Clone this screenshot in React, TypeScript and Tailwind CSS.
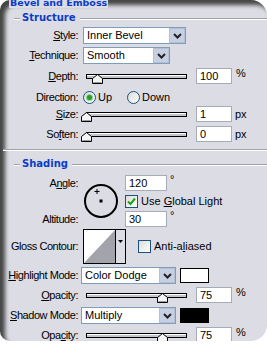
import React from 'react';

const Label = ({ children, className = '' }: { children: React.ReactNode; className?: string }) => (
  <div className={`w-[78px] shrink-0 text-right whitespace-nowrap tracking-[-0.45px] ${className}`}>{children}</div>
);

const Field = ({ value, w = 'w-[36px]' }: { value: string; w?: string }) => (
  <div className={`${w} h-[16px] bg-white border border-[#a5acb5] pl-[3px] leading-[14px] shrink-0`}>{value}</div>
);

const Slider = ({ thumb }: { thumb: number }) => (
  <div className="relative w-[101px] h-[15px] ml-[8px] shrink-0">
    <div className="absolute left-0 top-[5px] w-[101px] h-[5px] border border-black bg-[#c4c4cc] shadow-[inset_0_1px_0_#fff]" />
    <svg className="absolute top-[5px]" style={{ left: thumb }} width="11" height="10" viewBox="0 0 11 10">
      <path d="M0.5 9.5V4.5L5.5 0.5L10.5 4.5V9.5Z" fill="#f4f4f4" stroke="#000" />
      <path d="M1.5 8.5H9.5" stroke="#9a9aa2" />
    </svg>
  </div>
);

const Select = ({ value, w }: { value: string; w: string }) => (
  <div className={`${w} h-[17px] bg-white border border-[#7f9db9] flex items-center shrink-0`}>
    <span className="flex-1 pl-[3px] leading-none">{value}</span>
    <div className="w-[16px] h-[15px] bg-[#c7d0e2] border border-[#b4c0d6] flex items-center justify-center">
      <svg width="9" height="6" viewBox="0 0 9 6">
        <path d="M1 1L4.5 4.5L8 1" fill="none" stroke="#222" strokeWidth="2" />
      </svg>
    </div>
  </div>
);

const Radio = ({ on }: { on?: boolean }) => (
  <div className="w-[13px] h-[13px] rounded-full border border-[#1c5180] bg-gradient-to-br from-[#dcdcd6] to-white flex items-center justify-center shrink-0">
    {on && <div className="w-[5px] h-[5px] rounded-full bg-[#21a121] shadow-[0_0_0_1px_#8ed08e]" />}
  </div>
);

const Check = ({ on }: { on?: boolean }) => (
  <div className="w-[13px] h-[13px] border border-[#1c5180] bg-gradient-to-br from-[#dcdcd6] to-white flex items-center justify-center shrink-0">
    {on && (
      <svg width="9" height="9" viewBox="0 0 9 9">
        <path d="M1 4.5L3.5 7L8 1.5" fill="none" stroke="#21a121" strokeWidth="2" />
      </svg>
    )}
  </div>
);

const Heading = ({ children }: { children: React.ReactNode }) => (
  <div className="flex items-center h-[12px]">
    <div className="w-[6px] ml-[14px] h-px bg-[#a0a0a8] shadow-[0_1px_0_#fff]" />
    <span className="px-[2px] font-['DejaVu_Sans',sans-serif] font-bold text-[10px] text-[#0a3cc8] leading-none">{children}</span>
    <div className="flex-1 ml-[2px] h-px bg-[#a0a0a8] shadow-[0_1px_0_#fff]" />
  </div>
);

export default function App() {
  return (
    <div className="w-[267px] h-[346px] bg-white overflow-hidden font-['Liberation_Sans',sans-serif] text-[11px] text-black">
      <div className="relative h-[341px] rounded-tl-[10px] rounded-tr-[16px] rounded-br-[16px] rounded-bl-[10px] bg-[#dcdce4] shadow-[inset_5px_5px_4px_#444] overflow-hidden">
        <div className="absolute left-[9px] top-[-3px] px-[1px] bg-[#dcdce4] font-['DejaVu_Sans',sans-serif] font-bold text-[9.5px] leading-[11px] text-[#0a3cc8]">
          Bevel and Emboss
        </div>

        <div className="pt-[12px]">
          <Heading>Structure</Heading>

          <div className="flex items-center h-[17px] mt-[3px]">
            <Label><u>S</u>tyle:</Label>
            <div className="ml-[5px]"><Select value="Inner Bevel" w="w-[103px]" /></div>
          </div>

          <div className="flex items-center h-[17px] mt-[3px]">
            <Label><u>T</u>echnique:</Label>
            <div className="ml-[5px]"><Select value="Smooth" w="w-[87px]" /></div>
          </div>

          <div className="flex items-center h-[16px] mt-[4px]">
            <Label><u>D</u>epth:</Label>
            <Slider thumb={6} />
            <div className="ml-[9px]"><Field value="100" /></div>
            <span className="ml-[4px] self-start -mt-[3px]">%</span>
          </div>

          <div className="flex items-center h-[16px] mt-[5px]">
            <Label>Direction:</Label>
            <div className="ml-[5px] flex items-center gap-[2px]">
              <Radio on />
              <span>Up</span>
            </div>
            <div className="ml-[15px] flex items-center gap-[2px]">
              <Radio />
              <span>Down</span>
            </div>
          </div>

          <div className="flex items-center h-[16px] mt-[1px]">
            <Label><u>S</u>ize:</Label>
            <Slider thumb={-5} />
            <div className="ml-[9px]"><Field value="1" /></div>
            <span className="ml-[3px]">px</span>
          </div>

          <div className="flex items-center h-[16px] mt-[4px]">
            <Label>So<u>f</u>ten:</Label>
            <Slider thumb={-5} />
            <div className="ml-[9px]"><Field value="0" /></div>
            <span className="ml-[3px]">px</span>
          </div>

          <div className="mt-[7px] ml-[3px] h-px bg-[#a0a0a8] shadow-[0_1px_0_#fff]" />

          <div className="mt-[8px]">
            <Heading>Shading</Heading>
          </div>

          <div className="flex mt-[5px] h-[52px]">
            <div className="flex flex-col justify-between">
              <Label className="h-[16px] leading-[16px]">A<u>n</u>gle:</Label>
              <Label className="h-[16px] leading-[16px]">Altitude:</Label>
            </div>
            <svg className="ml-[5px] mt-[8px]" width="36" height="36" viewBox="0 0 36 36">
              <circle cx="18" cy="18" r="16" fill="none" stroke="#000" strokeWidth="2" />
              <rect x="16.5" y="16.5" width="3" height="3" fill="#000" />
              <path d="M14 6V11M11.5 8.5H16.5" stroke="#000" strokeWidth="1" />
            </svg>
            <div className="ml-[6px] flex flex-col justify-between">
              <div className="flex">
                <Field value="120" w="w-[42px]" />
                <span className="ml-[3px] leading-[8px]">°</span>
              </div>
              <div className="flex items-center gap-[3px]">
                <Check on />
                <span>Use <u>G</u>lobal Light</span>
              </div>
              <div className="flex">
                <Field value="30" w="w-[42px]" />
                <span className="ml-[3px] leading-[8px]">°</span>
              </div>
            </div>
          </div>

          <div className="flex items-center h-[35px] mt-[2px]">
            <Label>Gloss Contour:</Label>
            <div className="ml-[5px] w-[43px] h-[35px] border border-black bg-white flex">
              <svg width="31" height="33" viewBox="0 0 31 33">
                <path d="M0 33L31 0V33Z" fill="#a3a3ab" />
              </svg>
              <div className="flex-1 bg-[#dcdce4] border-l border-black flex justify-center pt-[10px]">
                <svg width="5" height="3" viewBox="0 0 5 3"><path d="M0 0H5L2.5 3Z" fill="#000" /></svg>
              </div>
            </div>
            <div className="ml-[12px] flex items-center gap-[3px]">
              <Check />
              <span>Anti-a<u>l</u>iased</span>
            </div>
          </div>

          <div className="flex items-center h-[17px] mt-[3px]">
            <Label><u>H</u>ighlight Mode:</Label>
            <div className="ml-[3px]"><Select value="Color Dodge" w="w-[95px]" /></div>
            <div className="ml-[4px] w-[29px] h-[15px] border border-black bg-white" />
          </div>

          <div className="flex items-center h-[16px] mt-[3px]">
            <Label><u>O</u>pacity:</Label>
            <Slider thumb={71} />
            <div className="ml-[9px]"><Field value="75" /></div>
            <span className="ml-[4px] self-start -mt-[3px]">%</span>
          </div>

          <div className="flex items-center h-[17px] mt-[4px]">
            <Label><u>S</u>hadow Mode:</Label>
            <div className="ml-[3px]"><Select value="Multiply" w="w-[95px]" /></div>
            <div className="ml-[4px] w-[29px] h-[15px] border border-black bg-black" />
          </div>

          <div className="flex items-center h-[16px] mt-[3px]">
            <Label>Opa<u>c</u>ity:</Label>
            <Slider thumb={71} />
            <div className="ml-[9px]"><Field value="75" /></div>
            <span className="ml-[4px] self-start -mt-[3px]">%</span>
          </div>
        </div>
      </div>
    </div>
  );
}
